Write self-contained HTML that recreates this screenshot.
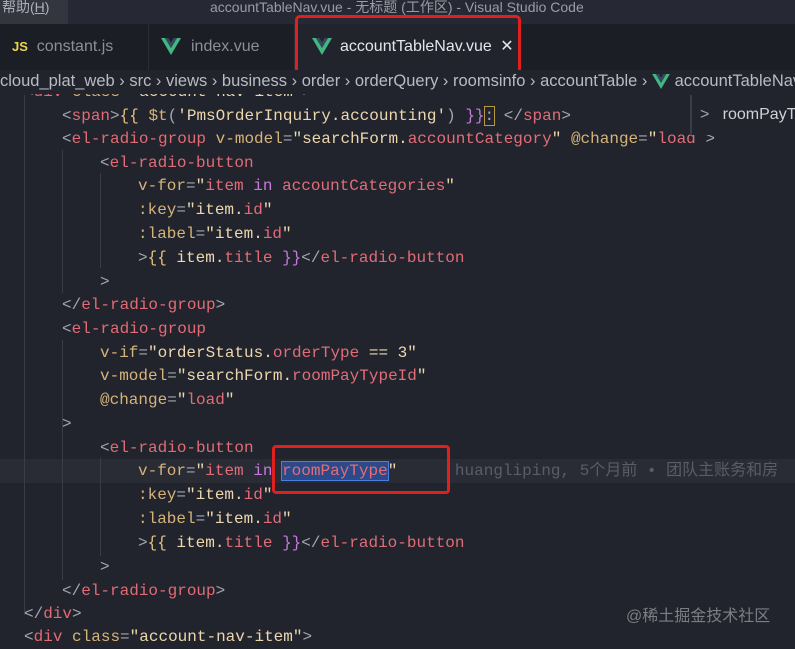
<!DOCTYPE html>
<html><head><meta charset="utf-8"><style>
body{margin:0;width:795px;height:644px;overflow:hidden;background:#22242d;font-family:"Liberation Sans","Noto Sans CJK SC",sans-serif;position:relative}
.title{position:absolute;left:0;top:0;width:795px;height:24px;background:#262833;color:#9a9ca6;font-size:14px}
.title .menu{position:absolute;left:0;top:0;width:66px;height:24px;background:#33353f;line-height:14px;padding-left:2px;color:#aeb0b8}
.title .t{position:absolute;left:210px;top:-3px}
.tabs{position:absolute;left:0;top:24px;width:795px;height:46px;background:#1c1e25}
.tab{position:absolute;top:0;height:46px;line-height:46px;font-size:16px;color:#8d8f98;white-space:nowrap}
.tab.active{background:#22242d;color:#e4e5ea}
.sep{position:absolute;top:0;width:1px;height:46px;background:#2c2e37}
.crumb{position:absolute;left:0;top:70px;width:795px;height:24px;line-height:22px;font-size:16.5px;color:#b9bbc3;white-space:nowrap;background:#22242d;overflow:hidden}
.code{position:absolute;left:0;top:0;width:795px;height:644px;font-family:"Liberation Mono","Noto Sans CJK SC",monospace;font-size:16px;white-space:pre}
.l{position:absolute;height:24px;line-height:24px}
.p{color:#a2a6b0}.tg{color:#e06c75}.a{color:#d6b37a}.s{color:#ecd7ae}.r{color:#e26d78}.k{color:#c678dd}.y{color:#e5c07b}.m{color:#c678dd}
.guide{position:absolute;width:1px;background:#3a3c46}
.vlogo{display:inline-block;vertical-align:middle}
</style></head><body>
<div class="code">
<div style="position:absolute;left:0;top:459px;width:795px;height:24px;background:#292b35"></div>
<div class="guide" style="left:24px;top:95px;height:520px"></div>
<div class="guide" style="left:62px;top:150px;height:143px"></div>
<div class="guide" style="left:100px;top:173px;height:95px"></div>
<div class="guide" style="left:62px;top:340px;height:240px"></div>
<div class="guide" style="left:100px;top:458px;height:98px"></div>
<div class="l" style="left:24px;top:80px"><span class="p">&lt;</span><span class="tg">div</span> <span class="a">class</span><span class="p">=</span><span class="s">"account-nav-item"</span><span class="p">&gt;</span></div>
<div class="l" style="left:62px;top:104px"><span class="p">&lt;</span><span class="tg">span</span><span class="p">&gt;</span><span class="y">{{</span> <span class="a">$t</span><span class="p">(</span><span class="s">'PmsOrderInquiry.accounting'</span><span class="p">)</span> <span class="m">}}</span><span class="p" style="outline:1px solid #b59b3c">:</span> <span class="p">&lt;/</span><span class="tg">span</span><span class="p">&gt;</span></div>
<div class="l" style="left:62px;top:127px"><span class="p">&lt;</span><span class="tg">el-radio-group</span> <span class="a">v-model</span><span class="p">=</span><span class="s">"searchForm.</span><span class="r">accountCategory</span><span class="s">"</span> <span class="a">@change</span><span class="p">=</span><span class="s">"</span><span class="r">load</span> <span class="p">&gt;</span></div>
<div class="l" style="left:100px;top:151px"><span class="p">&lt;</span><span class="tg">el-radio-button</span></div>
<div class="l" style="left:138px;top:174px"><span class="a">v-for</span><span class="p">=</span><span class="s">"</span><span class="r">item</span> <span class="k">in</span> <span class="r">accountCategories</span><span class="s">"</span></div>
<div class="l" style="left:138px;top:198px"><span class="a">:key</span><span class="p">=</span><span class="s">"item.</span><span class="r">id</span><span class="s">"</span></div>
<div class="l" style="left:138px;top:222px"><span class="a">:label</span><span class="p">=</span><span class="s">"item.</span><span class="r">id</span><span class="s">"</span></div>
<div class="l" style="left:138px;top:246px"><span class="p">&gt;</span><span class="y">{{</span> <span class="s">item.</span><span class="r">title</span> <span class="m">}}</span><span class="p">&lt;/</span><span class="tg">el-radio-button</span></div>
<div class="l" style="left:100px;top:270px"><span class="p">&gt;</span></div>
<div class="l" style="left:62px;top:293px"><span class="p">&lt;/</span><span class="tg">el-radio-group</span><span class="p">&gt;</span></div>
<div class="l" style="left:62px;top:317px"><span class="p">&lt;</span><span class="tg">el-radio-group</span></div>
<div class="l" style="left:100px;top:341px"><span class="a">v-if</span><span class="p">=</span><span class="s">"orderStatus.</span><span class="r">orderType</span> <span class="s">== 3"</span></div>
<div class="l" style="left:100px;top:364px"><span class="a">v-model</span><span class="p">=</span><span class="s">"searchForm.</span><span class="r">roomPayTypeId</span><span class="s">"</span></div>
<div class="l" style="left:100px;top:388px"><span class="a">@change</span><span class="p">=</span><span class="s">"</span><span class="r">load</span><span class="s">"</span></div>
<div class="l" style="left:62px;top:412px"><span class="p">&gt;</span></div>
<div class="l" style="left:100px;top:436px"><span class="p">&lt;</span><span class="tg">el-radio-button</span></div>
<div class="l" style="left:138px;top:459px"><span class="a">v-for</span><span class="p">=</span><span class="s">"</span><span class="r">item</span> <span class="k">in</span> <span class="r" style="background:#2c4a8a;outline:1px solid #4a7ee0">roomPayType</span><span class="s">"</span>      <span style="color:#5a5d68">huangliping, 5个月前 • 团队主账务和房</span></div>
<div class="l" style="left:138px;top:483px"><span class="a">:key</span><span class="p">=</span><span class="s">"item.</span><span class="r">id</span><span class="s">"</span></div>
<div class="l" style="left:138px;top:507px"><span class="a">:label</span><span class="p">=</span><span class="s">"item.</span><span class="r">id</span><span class="s">"</span></div>
<div class="l" style="left:138px;top:531px"><span class="p">&gt;</span><span class="y">{{</span> <span class="s">item.</span><span class="r">title</span> <span class="m">}}</span><span class="p">&lt;/</span><span class="tg">el-radio-button</span></div>
<div class="l" style="left:100px;top:555px"><span class="p">&gt;</span></div>
<div class="l" style="left:62px;top:579px"><span class="p">&lt;/</span><span class="tg">el-radio-group</span><span class="p">&gt;</span></div>
<div class="l" style="left:24px;top:602px"><span class="p">&lt;/</span><span class="tg">div</span><span class="p">&gt;</span></div>
<div class="l" style="left:24px;top:625px"><span class="p">&lt;</span><span class="tg">div</span> <span class="a">class</span><span class="p">=</span><span class="s">"account-nav-item"</span><span class="p">&gt;</span></div>
<div style="position:absolute;left:272px;top:445px;width:178px;height:49px;border:3px solid #e0201e;border-radius:4px;box-sizing:border-box"></div>
<div style="position:absolute;left:626px;top:602px;font-family:'Liberation Sans','Noto Sans CJK SC',sans-serif;font-size:16px;color:#7c7e86">@稀土掘金技术社区</div>
</div>
<div style="position:absolute;left:690px;top:95px;width:105px;height:40px;background:#22242d;border-left:2px solid #3a3c46;font-size:16px;color:#d0d2d8;line-height:40px;font-family:'Liberation Sans',sans-serif;white-space:nowrap;overflow:hidden"><span style="margin-left:8px;color:#a0a2aa">&gt;</span>&nbsp;&nbsp; roomPayTy</div>
<div class="title"><div class="menu">帮助(<u>H</u>)</div><div class="t">accountTableNav.vue - 无标题 (工作区) - Visual Studio Code</div></div>
<div class="tabs">
<div class="tab" style="left:0;width:148px"><span style="color:#e8d44d;font-weight:bold;font-size:13px;margin-left:12px">JS</span>&nbsp; constant.js</div>
<div class="sep" style="left:148px"></div>
<div class="tab" style="left:149px;width:145px"><svg class="vlogo" width="20" height="17" viewBox="0 0 20 17" style="margin-left:12px;margin-right:10px"><path d="M0 0h4l6 10 6-10h4L10 17z" fill="#41b883"/><path d="M4 0h3.5L10 4.5 12.5 0H16L10 10z" fill="#35495e"/></svg>index.vue</div>
<div class="sep" style="left:294px"></div>
<div class="tab active" style="left:295px;width:225px"><svg class="vlogo" width="20" height="17" viewBox="0 0 20 17" style="margin-left:17px;margin-right:8px"><path d="M0 0h4l6 10 6-10h4L10 17z" fill="#41b883"/><path d="M4 0h3.5L10 4.5 12.5 0H16L10 10z" fill="#35495e"/></svg>accountTableNav.vue <span style="margin-left:4px;font-size:16px">✕</span></div>
</div>
<div style="position:absolute;left:295px;top:15px;width:226px;height:59px;border:3px solid #e0201e;border-radius:5px;box-sizing:border-box"></div>
<div class="crumb">cloud_plat_web › src › views › business › order › orderQuery › roomsinfo › accountTable › <svg class="vlogo" width="18" height="15" viewBox="0 0 20 17"><path d="M0 0h4l6 10 6-10h4L10 17z" fill="#41b883"/><path d="M4 0h3.5L10 4.5 12.5 0H16L10 10z" fill="#35495e"/></svg> accountTableNav.vue</div>
</body></html>
